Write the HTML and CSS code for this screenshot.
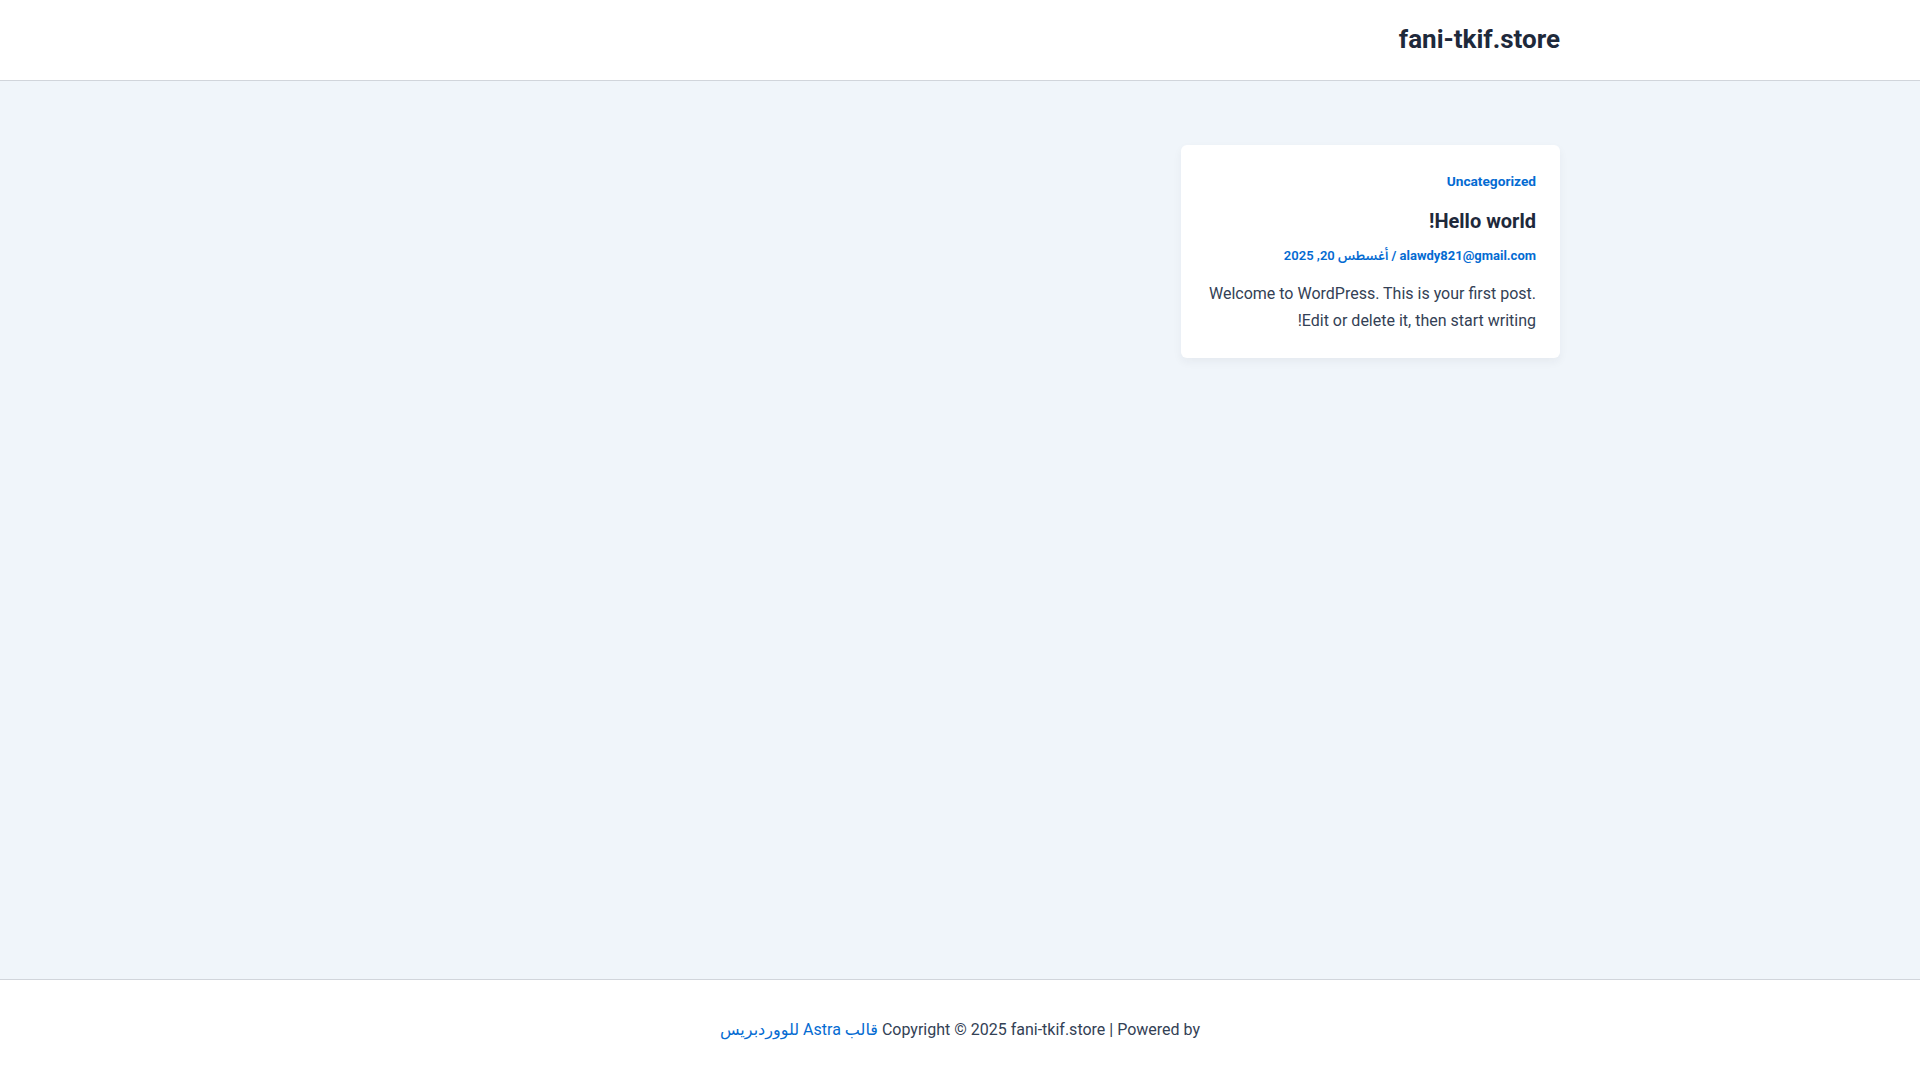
FILE: index.html
```html
<!DOCTYPE html>
<html lang="ar" dir="rtl">
<head>
<meta charset="utf-8">
<title>fani-tkif.store</title>
<link rel="stylesheet" href="styles.css">
</head>
<body>
<header class="site-header">
  <div class="container header-inner">
    <a class="site-title" href="#">fani-tkif.store</a>
  </div>
</header>
<main class="site-main">
  <div class="container posts-grid">
    <article class="post-card">
      <div class="post-cat"><a href="#">Uncategorized</a></div>
      <h2 class="post-title"><a href="#">Hello world!</a></h2>
      <div class="post-meta"><a href="#">alawdy821@gmail.com</a> / <span class="post-date">أغسطس 20, 2025</span></div>
      <p class="post-excerpt">Welcome to WordPress. This is your first post. Edit or delete it, then start writing!</p>
    </article>
  </div>
</main>
<footer class="site-footer">
  <div class="footer-text">Copyright © 2025 fani-tkif.store | Powered by <a href="#">قالب Astra للووردبريس</a></div>
</footer>
</body>
</html>
```
FILE: styles.css
```css
* { box-sizing: border-box; }
html, body { margin: 0; padding: 0; }
body {
  font-family: Roboto, "DejaVu Sans", "Noto Sans", sans-serif;
  color: #334155;
  background: #ffffff;
  min-height: 100vh;
  display: flex;
  flex-direction: column;
}
a { text-decoration: none; color: #046bd2; }
.container {
  max-width: 1240px;
  width: 100%;
  margin: 0 auto;
  padding: 0 20px;
}
.site-header {
  background: #ffffff;
  border-bottom: 1px solid #d1d5db;
  height: 81px;
}
.header-inner {
  height: 80px;
  display: flex;
  align-items: center;
}
.site-title {
  font-size: 26px;
  font-weight: 700;
  color: #1e293b;
  line-height: 1.2;
}
.site-main {
  flex: 1;
  background: #f0f5fa;
  padding: 64px 0;
}
.posts-grid {
  display: grid;
  grid-template-columns: repeat(3, 1fr);
  gap: 32px;
  align-items: start;
}
.post-card {
  background: #ffffff;
  border-radius: 6px;
  box-shadow: 0 4px 10px rgba(30, 41, 59, 0.05);
  padding: 25px 24px 24px;
}
.post-cat {
  font-size: 13.7px;
  font-weight: 700;
  line-height: 1.65;
  margin-bottom: 14px;
}
.post-title {
  margin: 0 0 10px;
  font-size: 20px;
  font-weight: 700;
  line-height: 1.4;
}
.post-title a { color: #1e293b; }
.post-meta {
  font-size: 13px;
  font-weight: 700;
  line-height: 1.65;
  color: #046bd2;
  margin-bottom: 14px;
}
.post-date {
  font-family: Roboto, "Noto Sans Arabic", "DejaVu Sans", sans-serif;
  font-weight: 600;
}
.post-excerpt {
  margin: 0;
  font-size: 16px;
  line-height: 1.7;
  color: #334155;
}
.site-footer {
  background: #ffffff;
  border-top: 1px solid #d1d5db;
  height: 101px;
  display: flex;
  align-items: center;
  justify-content: center;
}
.footer-text {
  font-size: 16px;
  line-height: 1.65;
  color: #334155;
}
```
